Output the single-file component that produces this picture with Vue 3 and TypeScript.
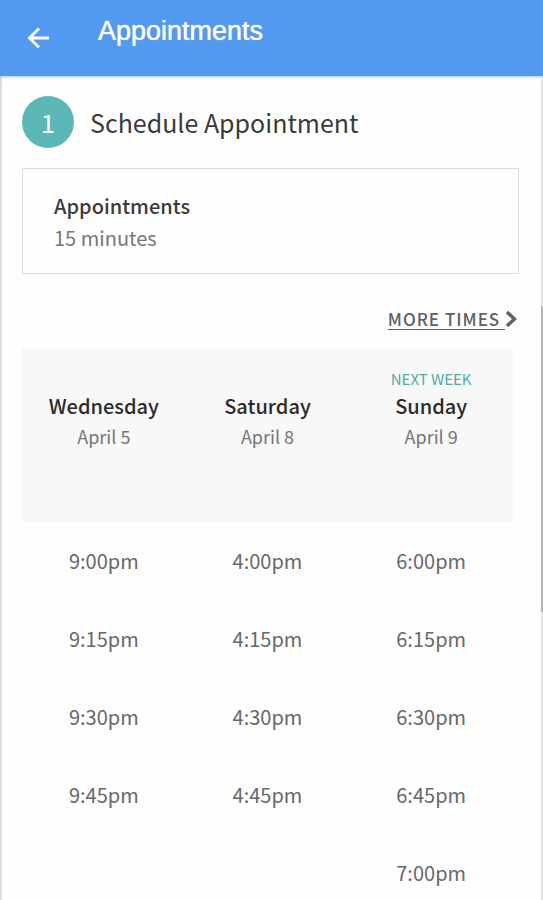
<script setup lang="ts">
interface Day {
  name: string
  date: string
  note?: string
  times: string[]
}

const days: Day[] = [
  { name: 'Wednesday', date: 'April 5', times: ['9:00pm', '9:15pm', '9:30pm', '9:45pm'] },
  { name: 'Saturday', date: 'April 8', times: ['4:00pm', '4:15pm', '4:30pm', '4:45pm'] },
  {
    name: 'Sunday',
    date: 'April 9',
    note: 'NEXT WEEK',
    times: ['6:00pm', '6:15pm', '6:30pm', '6:45pm', '7:00pm'],
  },
]

const rowCount = Math.max(...days.map((day) => day.times.length))
</script>

<template>
  <div class="app">
    <header class="bar">
      <button class="back" type="button" aria-label="Back">
        <svg viewBox="0 0 24 24" width="24" height="24" aria-hidden="true">
          <path d="M22 12H3M12 2.500L2.500 12L12 21.500" fill="none" stroke="currentColor" stroke-width="2.800" />
        </svg>
      </button>
      <h1 class="title">Appointments</h1>
    </header>

    <main class="content">
      <div class="step">
        <span class="badge">1</span>
        <h2 class="heading">Schedule Appointment</h2>
      </div>

      <section class="card">
        <h3 class="card-title">Appointments</h3>
        <p class="card-text">15 minutes</p>
      </section>

      <div class="more-row">
        <a class="more" href="#">
          <span class="more-label">MORE TIMES&nbsp;</span>
          <svg viewBox="0 0 12 18" width="12" height="18" aria-hidden="true">
            <path d="M2 2L9.500 9L2 16" fill="none" stroke="currentColor" stroke-width="3.400" />
          </svg>
        </a>
      </div>

      <table class="times">
        <thead>
          <tr>
            <th v-for="day in days" :key="day.name" scope="col">
              <span class="note">{{ day.note }}</span>
              <span class="day">{{ day.name }}</span>
              <span class="date">{{ day.date }}</span>
            </th>
          </tr>
        </thead>
        <tbody>
          <tr v-for="row in rowCount" :key="row">
            <td v-for="day in days" :key="day.name">
              <button v-if="day.times[row - 1]" class="slot" type="button">{{ day.times[row - 1] }}</button>
            </td>
          </tr>
        </tbody>
      </table>
    </main>
    <div class="thumb" aria-hidden="true"></div>
  </div>
</template>

<style>
body {
  margin: 0;
  background: #fefefe;
}
</style>

<style scoped>
.app {
  position: relative;
  display: flex;
  flex-direction: column;
  height: 100vh;
  box-sizing: border-box;
  overflow: hidden;
  font-family: "Noto Sans CJK SC", "Noto Sans", sans-serif;
  color: #3a3a3a;
}

.bar {
  position: relative;
  flex: none;
  display: flex;
  align-items: flex-start;
  gap: 47px;
  height: 76px;
  padding: 0 27px;
  box-sizing: border-box;
  background: #529aef;
  border-bottom: 1px solid #5795d8;
  box-shadow: 0 1px 3px rgba(82, 154, 239, 0.5);
  color: #fff;
}

.back {
  display: flex;
  margin: 26px 0 0;
  padding: 0;
  border: 0;
  background: none;
  color: inherit;
}

.title {
  margin: 16px 0 0;
  font-family: "Liberation Sans", Arial, sans-serif;
  font-size: 27px;
  font-weight: 400;
  line-height: 30px;
  text-shadow: 0 0 1px #fff;
}

.content {
  flex: 1;
  min-height: 0;
  padding: 20px 22px 0 20px;
  border-left: 2px solid #dedede;
  border-right: 2px solid #e6e6e6;
  overflow-y: auto;
  scrollbar-width: none;
}

.step {
  display: flex;
  align-items: center;
  gap: 16px;
  height: 52px;
}

.badge {
  display: flex;
  align-items: center;
  justify-content: center;
  width: 52px;
  height: 52px;
  border-radius: 50%;
  background: #5cb8b6;
  color: #fff;
  font-size: 25px;
  line-height: 32px;
}

.heading {
  margin: 0;
  font-size: 25px;
  font-weight: 400;
  line-height: 32px;
}

.card {
  margin-top: 20px;
  padding: 21px 31px 19px;
  border: 1px solid #dcdcdc;
}

.card-title {
  margin: 0;
  font-size: 20px;
  font-weight: 500;
  line-height: 32px;
}

.card-text {
  margin: 0;
  font-size: 20px;
  line-height: 32px;
  color: #777;
}

.more-row {
  display: flex;
  justify-content: flex-end;
  margin-top: 29px;
  padding-right: 2px;
}

.more {
  display: flex;
  align-items: center;
  height: 32px;
  font-size: 17px;
  font-weight: 500;
  letter-spacing: 1px;
  line-height: 32px;
  color: #606060;
  text-decoration: none;
}

.more-label {
  text-decoration: underline;
  text-underline-offset: 3px;
}

.times {
  width: calc(100% - 6px);
  margin: 13px 0 0;
  border-collapse: collapse;
  table-layout: fixed;
  text-align: center;
}

.times th {
  height: 174px;
  padding: 20px 0 0;
  box-sizing: border-box;
  background: #f8f8f8;
  font-weight: 400;
  vertical-align: top;
}

.note,
.day,
.date {
  display: block;
}

.note {
  height: 22px;
  font-size: 15px;
  line-height: 22px;
  color: #55aaa2;
}

.day {
  font-size: 20px;
  font-weight: 500;
  line-height: 32px;
  color: #2a2a2a;
}

.date {
  font-size: 18px;
  line-height: 28px;
  color: #757575;
}

.times td {
  height: 78px;
  padding: 0;
}

.slot {
  padding: 0;
  border: 0;
  background: none;
  font-family: inherit;
  font-size: 20px;
  line-height: 32px;
  color: #686868;
}

.thumb {
  position: absolute;
  top: 34%;
  right: 0;
  width: 2px;
  height: 34%;
  background: #b5b5b5;
}
</style>
